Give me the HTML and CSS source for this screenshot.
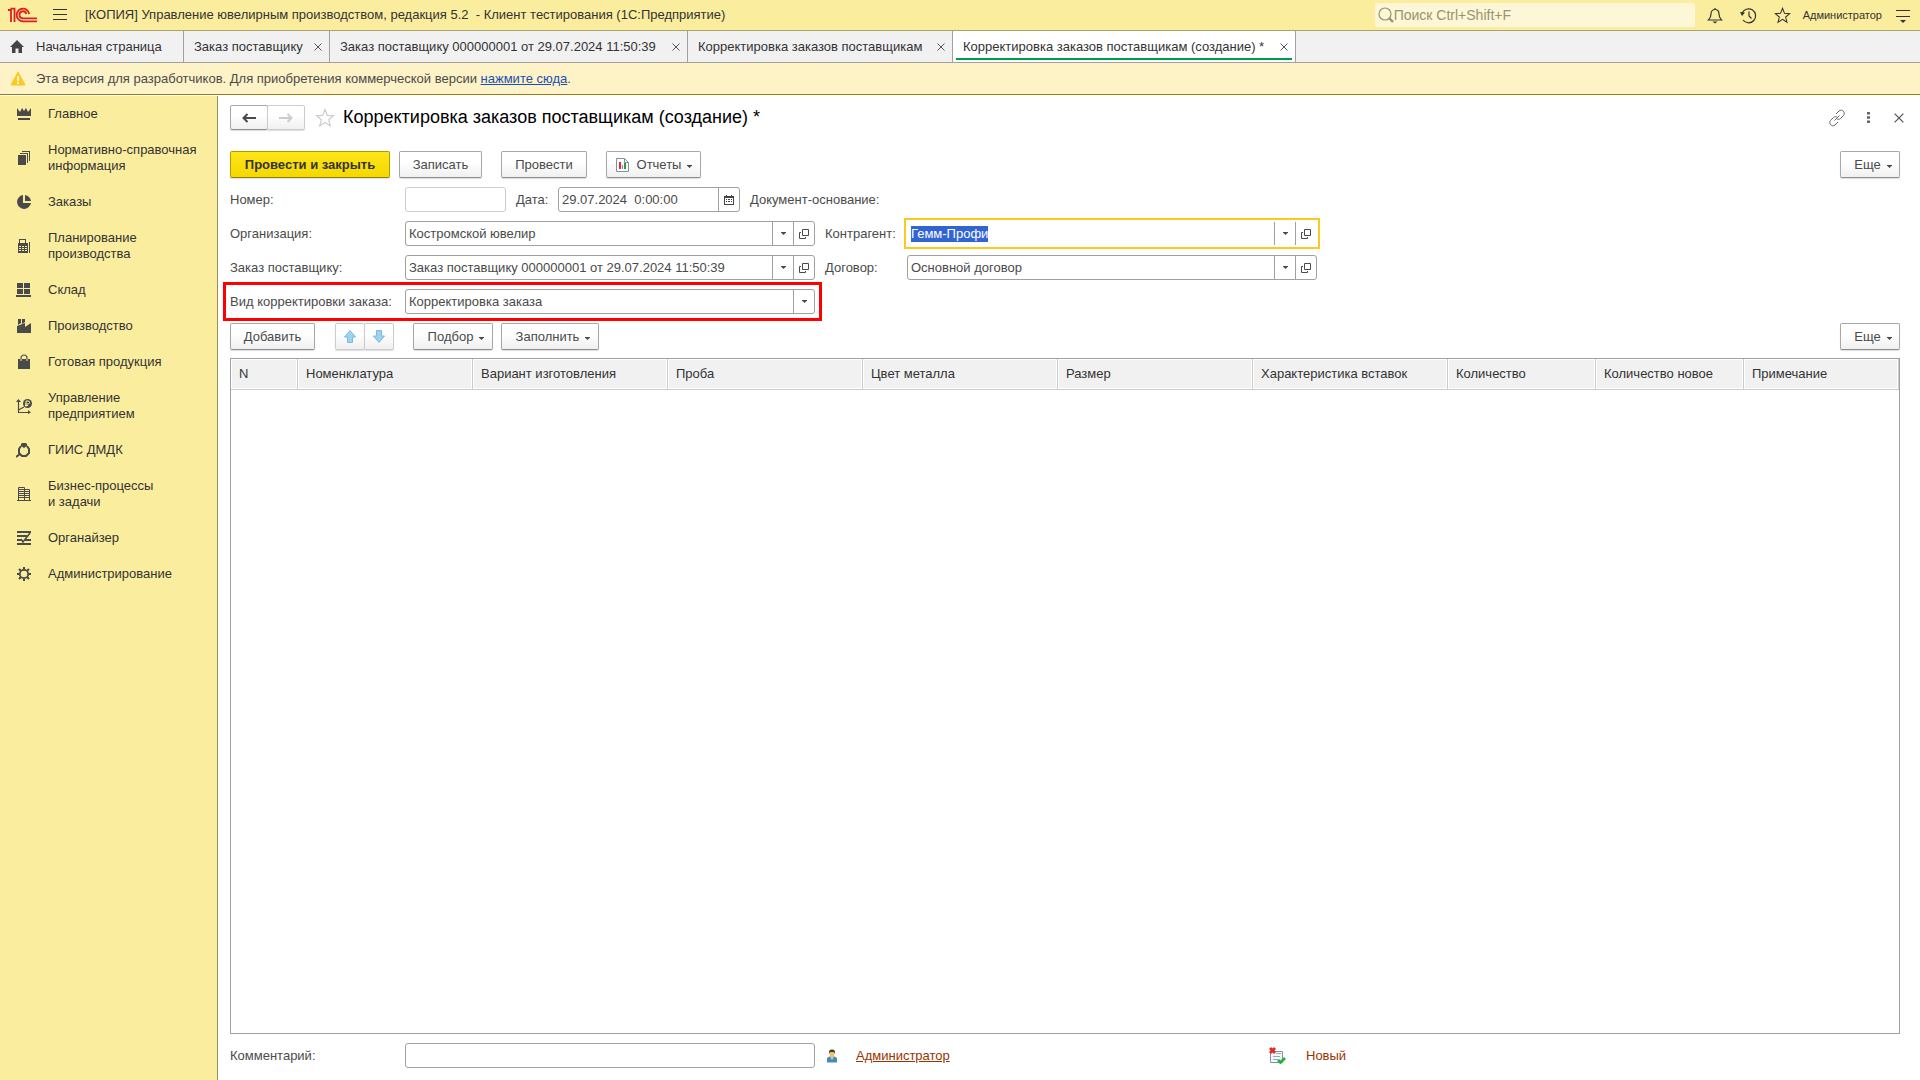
FILE: index.html
```html
<!DOCTYPE html>
<html lang="ru">
<head>
<meta charset="utf-8">
<meta name="viewport" content="width=device-width, initial-scale=1">
<title>Корректировка заказов поставщикам (создание)</title>
<link rel="stylesheet" href="styles.css">
</head>
<body>
<svg class="defs" aria-hidden="true">
  <symbol id="open" viewBox="0 0 10 10"><path d="M3.5 .5h6v6h-6zM2 3.500H.5v6h6V8" fill="none" stroke="#4a4a4a"/></symbol>
  <symbol id="caret" viewBox="0 0 5 3"><path d="M0 0h5v.5L2.500 3 0 .5z" fill="#4a4a4a"/></symbol>
  <symbol id="cross" viewBox="0 0 8 8"><path d="M.5.5l7 7M7.500.5l-7 7" fill="none" stroke="#555"/></symbol>
  <symbol id="star" viewBox="0 0 20 20"><path d="M10 1.500l2.300 5.900 6.200.4-4.800 4 1.600 6.200L10 14.500 4.700 18l1.600-6.200-4.800-4 6.200-.4z" fill="none" stroke="currentColor" stroke-width="1.200"/></symbol>
</svg>

<header class="titlebar">
  <svg class="logo" viewBox="0 0 30 20"><g fill="none" stroke="#dd2020" stroke-width="1.800"><path d="M0 5h3v12M2.500 3.700h4V17"/><path d="M21.200 9A6.300 6.300 0 1 0 15 16.300h14"/><path d="M18.300 9A3.500 3.500 0 1 0 15 13.300h14"/></g></svg>
  <button class="icon-button menu" aria-label="Главное меню"><svg width="14" height="12" viewBox="0 0 14 12"><path d="M0 .5h14M0 5.500h14M0 10.500h14" stroke="#333"/></svg></button>
  <span class="app-name">[КОПИЯ] Управление ювелирным производством, редакция 5.2&nbsp; - Клиент тестирования (1С:Предприятие)</span>
  <label class="search">
    <svg width="16" height="16" viewBox="0 0 16 16"><circle cx="7" cy="7" r="6" fill="none" stroke="#98936f" stroke-width="1.200"/><path d="M11 11l4 4" stroke="#98936f" stroke-width="2.400"/></svg>
    <input type="search" placeholder="Поиск Ctrl+Shift+F" aria-label="Поиск">
  </label>
  <nav class="tools">
    <button class="icon-button" aria-label="Оповещения"><svg width="16" height="17" viewBox="0 0 16 17"><path d="M8 1v1.500M1.500 13c2-2 2.500-3.500 2.500-6 0-3 1.800-4.500 4-4.500S12 4 12 7c0 2.500.5 4 2.500 6z" fill="none" stroke="#333" stroke-width="1.200"/><path d="M5.500 14.500h5L8 16.500z" fill="#333"/></svg></button>
    <button class="icon-button" aria-label="История"><svg width="17" height="17" viewBox="0 0 17 17"><path d="M2 6.500A7 7 0 1 1 3 13M9 4.500V9l2.500 2.500" fill="none" stroke="#333" stroke-width="1.200"/><path d="M0 5l5 .5-3 3.500z" fill="#333"/></svg></button>
    <button class="icon-button" aria-label="Избранное"><svg width="17" height="17"><use href="#star"/></svg></button>
    <a class="user" href="#user">Администратор</a>
    <button class="icon-button" aria-label="Настройки"><svg width="14" height="15" viewBox="0 0 14 15"><path d="M0 2.500h14M0 8.500h14" stroke="#333"/><path d="M4 12h6l-3 3z" fill="#333"/></svg></button>
  </nav>
</header>

<nav class="tabs">
  <a class="tab home" href="#home"><svg width="14" height="13" viewBox="0 0 14 13"><path d="M7 0l7 7h-2v6H8.500V8.500h-3V13H2V7H0z" fill="#444"/></svg>Начальная страница</a>
  <a class="tab tab-orders" href="#order">Заказ поставщику<svg class="close"><use href="#cross"/></svg></a>
  <a class="tab tab-order" href="#order1">Заказ поставщику 000000001 от 29.07.2024 11:50:39<svg class="close"><use href="#cross"/></svg></a>
  <a class="tab tab-list" href="#list">Корректировка заказов поставщикам<svg class="close"><use href="#cross"/></svg></a>
  <a class="tab tab-new active" href="#new">Корректировка заказов поставщикам (создание) *<svg class="close"><use href="#cross"/></svg></a>
</nav>

<div class="notice">
  <svg width="16" height="15" viewBox="0 0 16 15"><path d="M8 1l7 13H1z" fill="#fcc91e" stroke="#fcc91e" stroke-linejoin="round"/><path d="M8 5v5M8 11v2" stroke="#fff" stroke-width="1.600"/></svg>
  <span>Эта версия для разработчиков. Для приобретения коммерческой версии <a href="#buy">нажмите сюда</a>.</span>
</div>

<div class="workspace">
  <nav class="sections">
    <a href="#s1"><svg viewBox="0 0 16 16"><path d="M1 2l3 4 2-4 2 3 2-3 2 4 3-4v8H1zM2 12h12v2H2z"/></svg>Главное</a>
    <a href="#s2"><svg viewBox="0 0 16 16"><path d="M2 5h8v10H2zM4 3h8v10h-1V4H4zM6 1h8v10h-1V2H6z"/></svg>Нормативно-справочная информация</a>
    <a href="#s3"><svg viewBox="0 0 16 16"><path d="M7 1v8h8a7 7 0 1 1-8-8zM9 1q5 1 6 6H9z"/></svg>Заказы</a>
    <a href="#s4"><svg viewBox="0 0 16 16"><path fill-rule="evenodd" d="M3 1h7v4h2v10H2V5h1zM4 2v3h5V2zM3 8h2v1H3zM6 8h2v1H6zM9 8h2v1H9zM3 10h2v1H3zM6 10h2v1H6zM9 10h2v1H9zM3 12h2v1H3zM6 12h2v1H6zM9 12h2v1H9zM13 4h1v11h-1z"/></svg>Планирование производства</a>
    <a href="#s5"><svg viewBox="0 0 16 16"><path d="M1 1h6v5H1zM8 1h6v5H8zM1 7h6v5H1zM8 7h6v5H8zM0 13h15v2H0z"/></svg>Склад</a>
    <a href="#s6"><svg viewBox="0 0 16 16"><path d="M2 1h3v4L2 7zM6 1h3v3L6 6zM1 8l8-3v4l6-4v10H1z"/></svg>Производство</a>
    <a href="#s7"><svg viewBox="0 0 16 16"><path d="M2 5h12v10H2z"/><path d="M5 5V4a3 3 0 0 1 6 0v1" fill="none" stroke="#4a4a4a" stroke-width="1.200"/><path d="M5 5v2M11 5v2" stroke="#fbed9e"/></svg>Готовая продукция</a>
    <a href="#s8"><svg viewBox="0 0 16 16"><path d="M2.500 2v12.500H14M2.500 12L8 9" fill="none" stroke="#4a4a4a" stroke-width="1.200"/><path d="M0 4l2.500-3L5 4zM12 12l3 2.500-3 1.500z"/><circle cx="11.500" cy="5.500" r="4.500"/><path d="M10 8.500V3h2a1.500 1.500 0 0 1 0 3H9M9 7.500h3" fill="none" stroke="#fbed9e"/></svg>Управление предприятием</a>
    <a href="#s9"><svg viewBox="0 0 16 16"><path d="M5 4l-2 3v4l3 3h4l3-3V7l-2-3M4 12l-4 3" fill="none" stroke="#4a4a4a" stroke-width="2"/><path d="M5 2l1-1h4l1 1v2L8 6 5 4z"/></svg>ГИИС ДМДК</a>
    <a href="#s10"><svg viewBox="0 0 16 16"><path d="M1 14.500h14M2.500 14V1.500h6V14M9 3.500h4.500V14M3 3.500h5M3 5.500h5M3 7.500h5M3 9.500h5M3 11.500h5M9 5.500h4M9 7.500h4M9 9.500h4M9 11.500h4" fill="none" stroke="#4a4a4a"/></svg>Бизнес-процессы<br>и задачи</a>
    <a href="#s11"><svg viewBox="0 0 16 16"><path d="M1 2h14M1 6h10M1 10h4M9 10h6M1 14h14" stroke="#4a4a4a" stroke-width="2"/><path d="M5 9l2 3 7-9" fill="none" stroke="#4a4a4a" stroke-width="1.600"/></svg>Органайзер</a>
    <a href="#s12"><svg viewBox="0 0 16 16"><circle cx="8" cy="8" r="4.200" fill="none" stroke="#4a4a4a" stroke-width="1.800"/><path d="M8 1v3M8 12v3M1 8h3M12 8h3M3 3l2 2M11 11l2 2M13 3l-2 2M3 13l2-2" stroke="#4a4a4a" stroke-width="2"/></svg>Администрирование</a>
  </nav>

  <main class="document">
    <div class="heading">
      <div class="pair nav-pair">
        <button class="button" aria-label="Назад"><svg width="14" height="10" viewBox="0 0 14 10"><path d="M5.500 1L1.500 5l4 4M2 5h12" fill="none" stroke="#4a4a4a" stroke-width="2"/></svg></button>
        <button class="button" aria-label="Вперед" disabled><svg width="14" height="10" viewBox="0 0 14 10"><path d="M8.500 1l4 4-4 4M12 5H0" fill="none" stroke="#ccc" stroke-width="2"/></svg></button>
      </div>
      <button class="icon-button favorite" aria-label="В избранное"><svg width="20" height="20"><use href="#star"/></svg></button>
      <h1>Корректировка заказов поставщикам (создание) *</h1>
      <div class="window-tools">
        <button class="icon-button" aria-label="Ссылка"><svg width="18" height="18" viewBox="0 0 18 18"><path d="M8 5l3-3c3-2.500 7 1.500 4.500 4.500l-3 3c-1 1-2.500 1-3.500.5M10 13l-3 3c-3 2.500-7-1.500-4.500-4.500l3-3C6.500 7.500 8 7.500 9 8M6.500 11.500l5-5" fill="none" stroke="#666"/></svg></button>
        <button class="icon-button dots" aria-label="Дополнительно"><svg width="3" height="11" viewBox="0 0 3 11"><path d="M0 0h3v2.500H0zM0 4.250h3v2.500H0zM0 8.500h3V11H0z" fill="#666"/></svg></button>
        <button class="icon-button end" aria-label="Закрыть"><svg width="10" height="10"><use href="#cross"/></svg></button>
      </div>
    </div>

    <div class="commands">
      <button class="button primary">Провести и закрыть</button>
      <button class="button record">Записать</button>
      <button class="button post">Провести</button>
      <button class="button reports"><svg width="13" height="14" viewBox="0 0 13 14"><path d="M.5.5h8l4 4v9H.5z" fill="#fff" stroke="#7d92a3"/><path d="M8.500.5v4h4" fill="none" stroke="#7d92a3"/><path d="M3 4h2v7H3z" fill="#e02b2b"/><path d="M6 7h1v4H6z" fill="#888"/><path d="M8 5h2v6H8z" fill="#2c9a3a"/></svg>Отчеты<svg class="caret"><use href="#caret"/></svg></button>
      <button class="button more">Еще<svg class="caret"><use href="#caret"/></svg></button>
    </div>

    <form class="fields">
      <div class="line">
        <label class="caption" for="number">Номер:</label>
        <div class="field short muted"><input id="number" type="text"></div>
        <label class="date-caption" for="date">Дата:</label>
        <div class="field date"><input id="date" type="text" value="29.07.2024&nbsp; 0:00:00"><button type="button" aria-label="Календарь"><svg width="10" height="10" viewBox="0 0 10 10"><path d="M0 1h2V0h1v1h4V0h1v1h2v9H0z" fill="#444"/><path d="M1 3h8v6H1z" fill="#fff"/><path d="M2 4.500h1m1 0h2m1 0h1M2 6.500h1m1 0h2m1 0h1" stroke="#444"/></svg></button></div>
        <span class="basis">Документ-основание:</span>
      </div>
      <div class="line">
        <label class="caption" for="org">Организация:</label>
        <div class="field"><input id="org" type="text" value="Костромской ювелир"><button type="button" aria-label="Выбрать"><svg class="caret"><use href="#caret"/></svg></button><button type="button" aria-label="Открыть"><svg class="open"><use href="#open"/></svg></button></div>
        <label class="caption second" for="partner">Контрагент:</label>
        <div class="field focused"><input id="partner" type="text" value="Гемм-Профи"><button type="button" aria-label="Выбрать"><svg class="caret"><use href="#caret"/></svg></button><button type="button" aria-label="Открыть"><svg class="open"><use href="#open"/></svg></button></div>
      </div>
      <div class="line">
        <label class="caption" for="order">Заказ поставщику:</label>
        <div class="field"><input id="order" type="text" value="Заказ поставщику 000000001 от 29.07.2024 11:50:39"><button type="button" aria-label="Выбрать"><svg class="caret"><use href="#caret"/></svg></button><button type="button" aria-label="Открыть"><svg class="open"><use href="#open"/></svg></button></div>
        <label class="caption second" for="contract">Договор:</label>
        <div class="field"><input id="contract" type="text" value="Основной договор"><button type="button" aria-label="Выбрать"><svg class="caret"><use href="#caret"/></svg></button><button type="button" aria-label="Открыть"><svg class="open"><use href="#open"/></svg></button></div>
      </div>
      <div class="line highlighted">
        <label class="caption" for="kind">Вид корректировки заказа:</label>
        <div class="field"><select id="kind"><option>Корректировка заказа</option></select><span class="select-mark"><svg class="caret"><use href="#caret"/></svg></span></div>
      </div>
    </form>

    <div class="commands table-commands">
      <button class="button add">Добавить</button>
      <div class="pair">
        <button class="button" aria-label="Вверх" disabled><svg width="12" height="13" viewBox="0 0 12 13"><path d="M6 .5L11.500 7H8.500v5.500h-5V7H.5z" fill="#9bd3f1" stroke="#7fb9dc"/></svg></button>
        <button class="button" aria-label="Вниз" disabled><svg width="12" height="13" viewBox="0 0 12 13"><path d="M6 12.500L.5 6h3V.5h5V6h3z" fill="#9bd3f1" stroke="#7fb9dc"/></svg></button>
      </div>
      <button class="button pick">Подбор<svg class="caret"><use href="#caret"/></svg></button>
      <button class="button fill">Заполнить<svg class="caret"><use href="#caret"/></svg></button>
      <button class="button more">Еще<svg class="caret"><use href="#caret"/></svg></button>
    </div>

    <div class="table-frame">
      <table>
        <thead>
          <tr><th class="c-num">N</th><th class="c-item">Номенклатура</th><th class="c-mid">Вариант изготовления</th><th class="c-mid">Проба</th><th class="c-mid">Цвет металла</th><th class="c-mid">Размер</th><th class="c-mid">Характеристика вставок</th><th class="c-qty">Количество</th><th class="c-qty">Количество новое</th><th>Примечание</th></tr>
        </thead>
        <tbody></tbody>
      </table>
    </div>

    <footer class="line bottom">
      <label class="caption" for="comment">Комментарий:</label>
      <div class="field"><input id="comment" type="text"></div>
      <div class="author"><svg width="12" height="14" viewBox="0 0 12 14"><path d="M1 13.500V10q0-2 3-2.500h4q3 .5 3 2.500v3.500z" fill="#3a8fc4"/><path d="M4 6h4l-.5 3L6 11 4.500 9z" fill="#f2bd6c"/><ellipse cx="6" cy="4.500" rx="2.500" ry="3" fill="#f2bd6c"/><path d="M3 5V3q0-2.500 3-2.500T9 3v2L8 3H4z" fill="#4a3a2a"/></svg><a href="#author">Администратор</a></div>
      <div class="status"><svg width="17" height="17" viewBox="0 0 17 17"><path d="M1.500 4.500h12v11h-12z" fill="#f4f8fb" stroke="#7d92a3"/><path d="M7 6.500h5M4 9.500h7M4 12.500h5" stroke="#9aa9b5"/><path d="M1 1l5 5M6 1L1 6" stroke="#dd2a2a" stroke-width="2.800"/><path d="M9 13l2.500 2.500L16 11" fill="none" stroke="#27b03a" stroke-width="2.800"/></svg><span>Новый</span></div>
    </footer>
  </main>
</div>
<script src="script.js"></script>
</body>
</html>
```
FILE: styles.css
```css
* { box-sizing: border-box; }

body {
  margin: 0;
  min-height: 100vh;
  display: flex;
  flex-direction: column;
  background: #fff;
  color: #4a4a4a;
  font: 13px/16px "Liberation Sans", Arial, sans-serif;
}

button, input, select { font: inherit; color: inherit; }
svg { flex: none; display: block; }
.defs { position: absolute; width: 0; height: 0; }

.icon-button {
  display: flex;
  align-items: center;
  justify-content: center;
  padding: 0;
  border: 0;
  background: none;
  color: #333;
}

.caret { width: 5px; height: 3px; }
.open { width: 10px; height: 10px; }

/* Title bar */
.titlebar {
  display: flex;
  align-items: center;
  height: 31px;
  padding: 0 10px 0 8px;
  background: #fbed9e;
  border-bottom: 1px solid #a9a36c;
  color: #333;
}
.logo { width: 30px; height: 20px; }
.menu { margin: 0 18px 0 15px; }
.app-name { flex: 1; white-space: nowrap; }
.search {
  display: flex;
  align-items: center;
  width: 320px;
  height: 24px;
  padding-left: 3px;
  border-radius: 2px;
  background: #fdf7d8;
}
.search input {
  flex: 1;
  min-width: 0;
  padding: 0;
  border: 0;
  outline: 0;
  background: none;
  appearance: none;
  font-size: 14px;
}
.search input::placeholder { color: #98936f; }
.tools { display: flex; align-items: center; gap: 17px; margin-left: 12px; }
.user { margin: 0 -3px 0 -5px; color: #333; font-size: 11px; text-decoration: none; }

/* Open windows */
.tabs {
  display: flex;
  height: 32px;
  background: #f1f1f1;
  border-bottom: 1px solid #a0a0a0;
}
.tab {
  display: flex;
  align-items: center;
  justify-content: space-between;
  padding: 0 7px 0 10px;
  border-right: 1px solid #a0a0a0;
  color: #333;
  text-decoration: none;
  white-space: nowrap;
}
.home { justify-content: flex-start; gap: 12px; width: 184px; }
.tab-orders { width: 146px; }
.tab-order { width: 358px; }
.tab-list { width: 265px; }
.tab-new { width: 343px; }
.close { width: 8px; height: 8px; }
.active {
  background: linear-gradient(#009c4d, #009c4d) 3px 27px / calc(100% - 6px) 2px no-repeat #fff;
}

.notice {
  display: flex;
  align-items: center;
  gap: 10px;
  height: 32px;
  padding-left: 10px;
  background: #fef2c7;
  border-bottom: 1px solid #9a7d14;
}
.notice a { color: #1a50b0; }

.workspace { flex: 1; display: flex; }

/* Sections */
.sections {
  flex: none;
  width: 218px;
  margin-top: 1px;
  background: #fbed9e;
  border-right: 1px solid #96905c;
}
.sections a {
  display: block;
  position: relative;
  padding: 10px 10px 10px 48px;
  color: #333;
  text-decoration: none;
}
.sections svg {
  position: absolute;
  left: 16px;
  top: calc(50% - 8px);
  width: 16px;
  height: 16px;
  fill: #4a4a4a;
}

/* Document form */
.document {
  flex: 1;
  min-width: 0;
  display: flex;
  flex-direction: column;
  padding: 10px 20px 12px 12px;
}
.heading { display: flex; align-items: center; height: 25px; }
h1 { flex: 1; margin: 0; padding-bottom: 2px; color: #000; font-size: 18px; line-height: 24px; font-weight: normal; }
.favorite { margin: 0 8px 0 10px; color: #ccc; }
.window-tools { display: flex; align-items: center; gap: 14px; margin-right: -4px; }
.dots { width: 16px; }
.end { margin-left: 4px; }

.button {
  display: flex;
  align-items: center;
  justify-content: center;
  height: 27px;
  padding: 0 6px 0 12px;
  border: 1px solid #a8a8a8;
  border-bottom-color: #8e8e8e;
  border-radius: 2px;
  background: linear-gradient(#fff 40%, #f0f0f0);
  box-shadow: 0 1px 1px #ddd;
  white-space: nowrap;
}
.button .caret { margin: 4px 0 0 6px; }
.pair { display: flex; }
.pair .button { width: 30px; padding: 0; }
.pair .button + .button { margin-left: -1px; }
.pair .button:disabled { border-color: #ccc; }
.nav-pair .button { width: 38px; height: 25px; }

.commands { display: flex; margin-top: 21px; }
.primary {
  width: 160px;
  padding: 0;
  border-color: #b09c00;
  border-bottom-color: #948300;
  background: linear-gradient(#ffe51a, #f5d800);
  color: #333;
  font-weight: bold;
}
.record, .post, .add { padding: 0; }
.record { width: 83px; margin-left: 9px; }
.post { width: 86px; margin-left: 19px; }
.reports { width: 95px; margin-left: 19px; padding-left: 7px; }
.reports svg:first-child { margin-right: 8px; }
.more { width: 60px; margin-left: auto; }

.fields { display: flex; flex-direction: column; gap: 9px; margin-top: 9px; }
.line { display: flex; align-items: center; }
.caption { width: 175px; }
.second { width: 82px; margin-left: 10px; }
.date-caption { width: 42px; margin-left: 10px; }
.basis { margin-left: 10px; }

.field {
  display: flex;
  width: 410px;
  height: 25px;
  border: 1px solid #a0a0a0;
  border-radius: 3px;
  background: #fff;
}
.field input, .field select {
  flex: 1;
  min-width: 0;
  padding: 0 3px;
  border: 0;
  outline: 0;
  background: none;
  appearance: none;
}
.field button, .select-mark {
  display: flex;
  align-items: center;
  justify-content: center;
  width: 21px;
  padding: 0;
  border: 0;
  border-left: 1px solid #a0a0a0;
  background: none;
}
.short { width: 101px; }
.date { width: 182px; }
.muted { border-color: #ccc; }
.focused { border-color: transparent; outline: 2px solid #fcc91e; outline-offset: 1px; border-radius: 0; }
.focused input::selection { background: #3264d4; color: #fff; }

.highlighted { position: relative; align-self: flex-start; }
.highlighted::after {
  content: "";
  position: absolute;
  inset: -7px;
  border: 3px solid #f00;
  pointer-events: none;
}

.table-commands { margin-top: 9px; }
.add { width: 85px; }
.table-commands .pair { margin-left: 20px; }
.pick { width: 80px; margin-left: 19px; }
.fill { width: 98px; margin-left: 8px; }

.table-frame { flex: 1; margin-top: 8px; border: 1px solid #a0a0a0; }
table { width: 100%; table-layout: fixed; border-collapse: separate; border-spacing: 0; }
th {
  height: 31px;
  padding: 0 0 0 8px;
  border-right: 1px solid #ccc;
  border-bottom: 1px solid #ccc;
  background: #f1f1f1;
  box-shadow: inset 0 0 0 1px #fff;
  color: #333;
  font-weight: normal;
  text-align: left;
  white-space: nowrap;
}
.c-num { width: 67px; }
.c-item { width: 175px; }
.c-mid { width: 195px; }
.c-qty { width: 148px; }

.bottom { margin-top: 9px; }
.author { display: flex; align-items: center; gap: 18px; width: 443px; margin-left: 11px; }
.author a, .status { color: #993300; }
.status { display: flex; align-items: center; gap: 20px; }
```
FILE: script.js
```js
const partner = document.getElementById("partner");
partner.focus();
partner.select();
```
